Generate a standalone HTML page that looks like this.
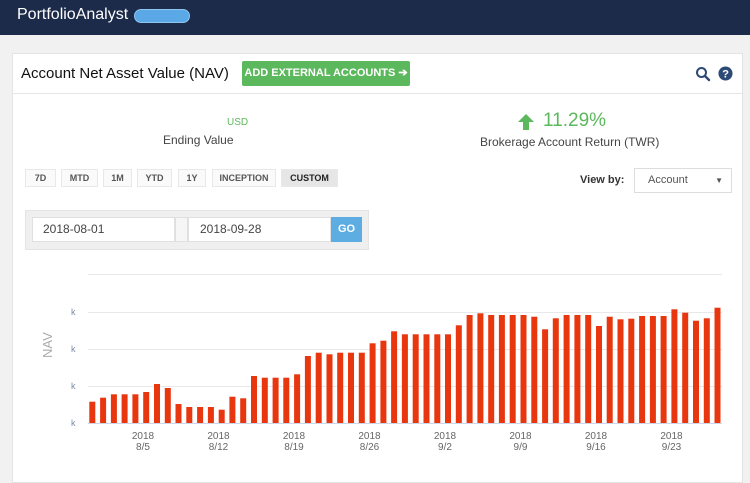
<!DOCTYPE html>
<html><head><meta charset="utf-8"><style>
*{box-sizing:border-box;margin:0;padding:0}
body{width:750px;height:474px;overflow:hidden;background:#f1f1f1;font-family:"Liberation Sans",sans-serif;position:relative;color:#333}
.hdr{position:absolute;left:0;top:0;width:750px;height:35px;background:#1c2b4a}
.logo{position:absolute;left:17px;top:6px;color:#fff;font-size:16px}
.pill{position:absolute;left:134px;top:9px;width:56px;height:14px;border-radius:7px;background:#5aa9e6;border:1px solid #8cc5ef}
.panel{position:absolute;left:12px;top:53px;width:731px;height:430px;background:#fff;border:1px solid #e4e4e4}
.ph{position:absolute;left:0;top:0;width:729px;height:40px;border-bottom:1px solid #e6e6e6}
.title{position:absolute;left:8px;top:11px;font-size:15px;color:#111}
.gbtn{position:absolute;left:229px;top:7px;width:168px;height:25px;background:#5cb85c;border-radius:2px;color:#fff;font-size:11px;font-weight:bold;line-height:25px;text-align:center}
.ab{position:absolute;font-size:11px;color:#999}
.seg{position:absolute;top:115px;height:18px;border:1px solid #e8e8e8;background:#fafafa;font-size:9px;font-weight:bold;color:#555;text-align:center;line-height:16px}
</style></head><body>
<div class="hdr"><div class="logo">PortfolioAnalyst</div><div class="pill"></div></div>
<div class="panel">
<div class="ph"><div class="title">Account Net Asset Value (NAV)</div><div class="gbtn">ADD EXTERNAL ACCOUNTS ➔</div>
<svg style="position:absolute;left:682px;top:12px" width="16" height="16" viewBox="0 0 16 16"><circle cx="6.5" cy="6.5" r="4.5" fill="none" stroke="#2b4a75" stroke-width="2"/><path d="M10 10l4 4" stroke="#2b4a75" stroke-width="2.4" stroke-linecap="round"/></svg>
<svg style="position:absolute;left:705px;top:12px" width="15" height="15" viewBox="0 0 16 16"><circle cx="8" cy="8" r="7.5" fill="#2b4a75"/><text x="8" y="12.5" font-size="12" font-weight="bold" fill="#fff" text-anchor="middle" font-family="Liberation Sans">?</text></svg>
</div>
<div style="position:absolute;left:214px;top:63px;font-size:10px;color:#5cb85c">USD</div>
<div style="position:absolute;left:150px;top:79px;font-size:12px;color:#444">Ending Value</div>
<svg style="position:absolute;left:504px;top:59px" width="18" height="18" viewBox="0 0 18 18"><path d="M9 1L1 9h5v8h6V9h5z" fill="#5cb85c"/></svg>
<div style="position:absolute;left:530px;top:56px;font-size:19px;color:#5cb85c">11.29%</div>
<div style="position:absolute;left:467px;top:81px;font-size:12px;color:#444">Brokerage Account Return (TWR)</div>
<div class="seg" style="left:12px;width:31px">7D</div>
<div class="seg" style="left:48px;width:37px">MTD</div>
<div class="seg" style="left:90px;width:29px">1M</div>
<div class="seg" style="left:124px;width:35px">YTD</div>
<div class="seg" style="left:165px;width:28px">1Y</div>
<div class="seg" style="left:199px;width:64px">INCEPTION</div>
<div class="seg" style="left:268px;width:57px;background:#e6e6e6;color:#222">CUSTOM</div>
<div style="position:absolute;left:567px;top:120px;font-size:11px;font-weight:bold;color:#333">View by:</div>
<div style="position:absolute;left:621px;top:114px;width:98px;height:25px;border:1px solid #ddd;font-size:11px;color:#555;line-height:23px;padding-left:13px">Account<span style="position:absolute;right:8px;font-size:8px">▼</span></div>
<div style="position:absolute;left:12px;top:156px;width:344px;height:40px;background:#efefef;border:1px solid #e4e4e4"></div>
<div style="position:absolute;left:19px;top:163px;width:143px;height:25px;background:#fff;border:1px solid #e0e0e0;font-size:12px;color:#444;line-height:23px;padding-left:10px">2018-08-01</div>
<div style="position:absolute;left:162px;top:163px;width:13px;height:25px;background:#f6f6f6;border:1px solid #e0e0e0"></div>
<div style="position:absolute;left:175px;top:163px;width:143px;height:25px;background:#fff;border:1px solid #e0e0e0;font-size:12px;color:#444;line-height:23px;padding-left:11px">2018-09-28</div>
<div style="position:absolute;left:318px;top:163px;width:31px;height:25px;background:#5dade2;color:#fff;font-size:11px;font-weight:bold;text-align:center;line-height:25px">GO</div>
</div>
<svg style="position:absolute;left:0;top:0" width="750" height="474">
<g stroke="#e8e8ea" stroke-width="1"><line x1="88" x2="722" y1="274.5" y2="274.5"/><line x1="88" x2="722" y1="312.5" y2="312.5"/><line x1="88" x2="722" y1="349.5" y2="349.5"/><line x1="88" x2="722" y1="386.5" y2="386.5"/><line x1="88" x2="722" y1="423.5" y2="423.5" stroke="#ccd6eb"/></g>
<g font-size="9" fill="#7a8aa8" font-family="Liberation Sans"><text x="71" y="315">k</text><text x="71" y="352">k</text><text x="71" y="389">k</text><text x="71" y="426">k</text></g>
<text transform="translate(52,358) rotate(-90)" font-size="13" fill="#aaa" font-family="Liberation Sans">NAV</text>
<g fill="#e8360e">
<rect x="89.3" y="401.7" width="6" height="21.3"/><rect x="100.1" y="397.7" width="6" height="25.3"/><rect x="110.9" y="394.3" width="6" height="28.7"/><rect x="121.6" y="394.3" width="6" height="28.7"/><rect x="132.4" y="394.3" width="6" height="28.7"/><rect x="143.2" y="392" width="6" height="31"/><rect x="154" y="384" width="6" height="39"/><rect x="164.8" y="388" width="6" height="35"/><rect x="175.5" y="404" width="6" height="19"/><rect x="186.3" y="407" width="6" height="16"/><rect x="197.1" y="407" width="6" height="16"/><rect x="207.9" y="407" width="6" height="16"/><rect x="218.7" y="409.7" width="6" height="13.3"/><rect x="229.4" y="396.7" width="6" height="26.3"/><rect x="240.2" y="398.3" width="6" height="24.7"/><rect x="251" y="376" width="6" height="47"/><rect x="261.8" y="377.7" width="6" height="45.3"/><rect x="272.6" y="377.7" width="6" height="45.3"/><rect x="283.3" y="377.7" width="6" height="45.3"/><rect x="294.1" y="374.3" width="6" height="48.7"/><rect x="304.9" y="356" width="6" height="67"/><rect x="315.7" y="352.7" width="6" height="70.3"/><rect x="326.5" y="354.3" width="6" height="68.7"/><rect x="337.2" y="352.7" width="6" height="70.3"/><rect x="348" y="352.7" width="6" height="70.3"/><rect x="358.8" y="352.7" width="6" height="70.3"/><rect x="369.6" y="343.3" width="6" height="79.7"/><rect x="380.4" y="340.7" width="6" height="82.3"/><rect x="391.1" y="331.3" width="6" height="91.7"/><rect x="401.9" y="334.3" width="6" height="88.7"/><rect x="412.7" y="334.3" width="6" height="88.7"/><rect x="423.5" y="334.3" width="6" height="88.7"/><rect x="434.3" y="334.3" width="6" height="88.7"/><rect x="445" y="334.3" width="6" height="88.7"/><rect x="455.8" y="325.3" width="6" height="97.7"/><rect x="466.6" y="315" width="6" height="108"/><rect x="477.4" y="313.3" width="6" height="109.7"/><rect x="488.2" y="315" width="6" height="108"/><rect x="498.9" y="315" width="6" height="108"/><rect x="509.7" y="315" width="6" height="108"/><rect x="520.5" y="315" width="6" height="108"/><rect x="531.3" y="316.7" width="6" height="106.3"/><rect x="542.1" y="329.3" width="6" height="93.7"/><rect x="552.8" y="318.3" width="6" height="104.7"/><rect x="563.6" y="315" width="6" height="108"/><rect x="574.4" y="315" width="6" height="108"/><rect x="585.2" y="315" width="6" height="108"/><rect x="596" y="326" width="6" height="97"/><rect x="606.7" y="316.7" width="6" height="106.3"/><rect x="617.5" y="319.3" width="6" height="103.7"/><rect x="628.3" y="318.7" width="6" height="104.3"/><rect x="639.1" y="316" width="6" height="107"/><rect x="649.9" y="316" width="6" height="107"/><rect x="660.6" y="316" width="6" height="107"/><rect x="671.4" y="309.3" width="6" height="113.7"/><rect x="682.2" y="312.7" width="6" height="110.3"/><rect x="693" y="320.7" width="6" height="102.3"/><rect x="703.8" y="318.3" width="6" height="104.7"/><rect x="714.5" y="307.7" width="6" height="115.3"/>
</g>
<g font-size="10" fill="#666" font-family="Liberation Sans" text-anchor="middle">
<text x="143" y="439">2018</text><text x="143" y="450">8/5</text>
<text x="218.5" y="439">2018</text><text x="218.5" y="450">8/12</text>
<text x="294" y="439">2018</text><text x="294" y="450">8/19</text>
<text x="369.5" y="439">2018</text><text x="369.5" y="450">8/26</text>
<text x="445" y="439">2018</text><text x="445" y="450">9/2</text>
<text x="520.5" y="439">2018</text><text x="520.5" y="450">9/9</text>
<text x="596" y="439">2018</text><text x="596" y="450">9/16</text>
<text x="671.5" y="439">2018</text><text x="671.5" y="450">9/23</text>
</g>
</svg>
</body></html>
